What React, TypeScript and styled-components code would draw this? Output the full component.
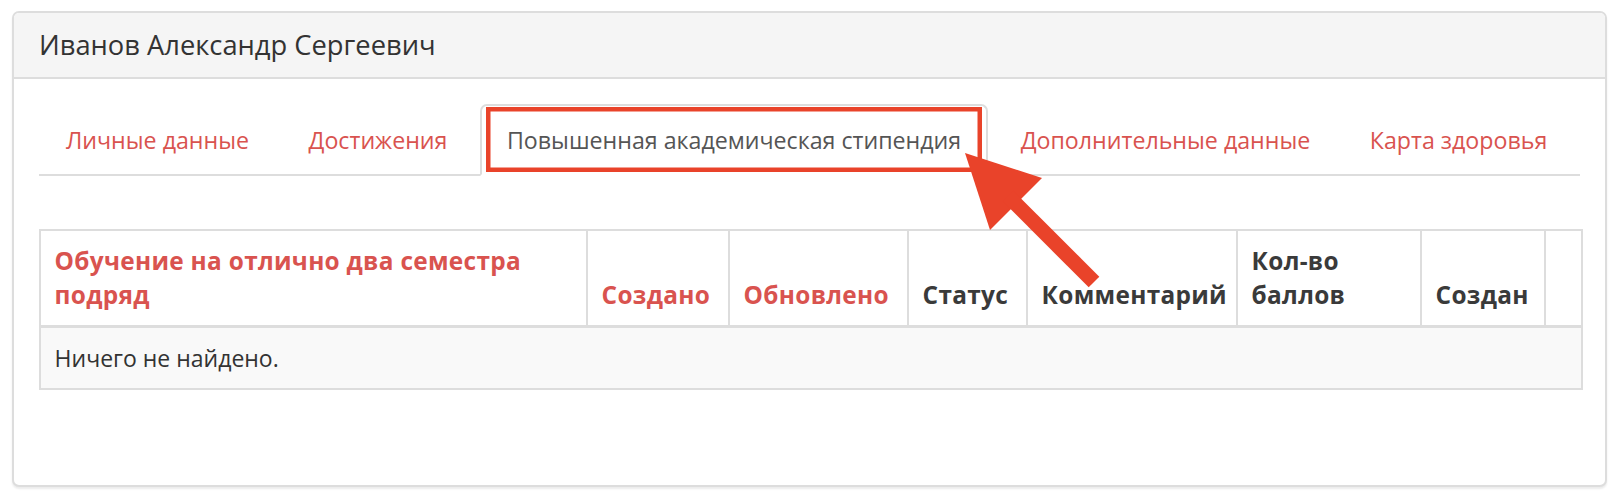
import styled, { createGlobalStyle } from "styled-components";

const GlobalStyle = createGlobalStyle`
  html, body {
    margin: 0;
    padding: 0;
    background: #ffffff;
  }
  body {
    font-family: "Open Sans", "Liberation Sans", sans-serif;
    font-size: 23px;
    line-height: 34px;
    color: #333333;
  }
  * { box-sizing: border-box; }
`;

const Page = styled.div`
  position: relative;
  width: 1618px;
  height: 498px;
  padding: 11px 11px 0 12px;
`;

const Panel = styled.div`
  background: #ffffff;
  border: 2px solid #dddddd;
  border-radius: 7px;
  box-shadow: 0 2px 2px rgba(0, 0, 0, 0.08);
  overflow: hidden;
`;

const PanelHeading = styled.div`
  background: #f5f5f5;
  border-bottom: 2px solid #dddddd;
  padding: 17px 25px;
`;

const PanelTitle = styled.h3`
  margin: 0;
  font-size: 27.3px;
  line-height: 30px;
  font-weight: 400;
  color: #333333;
`;

const PanelBody = styled.div`
  padding: 25px 25px 95px;
`;

const Tabs = styled.ul`
  display: flex;
  list-style: none;
  margin: 0;
  padding: 0;
  border-bottom: 2px solid #dddddd;
`;

const Tab = styled.li`
  margin-bottom: -2px;
`;

const TabLink = styled.a<{ $active?: boolean }>`
  display: block;
  margin-right: 5.5px;
  padding: 17px 25px;
  font-size: 23.2px;
  line-height: 34px;
  border: 2px solid ${(p) => (p.$active ? "#dddddd" : "transparent")};
  border-bottom-color: transparent;
  border-radius: 7px 7px 0 0;
  background: ${(p) => (p.$active ? "#ffffff" : "transparent")};
  color: ${(p) => (p.$active ? "#555555" : "#d9534f")};
  text-decoration: none;
  white-space: nowrap;
  cursor: pointer;
`;

const TabContent = styled.div`
  padding-top: 53px;
`;

const Table = styled.table`
  width: 100%;
  table-layout: fixed;
  border-collapse: collapse;
  border: 2px solid #dddddd;
`;

const Th = styled.th<{ $link?: boolean }>`
  padding: 13px 13.6px;
  font-size: 24.4px;
  letter-spacing: 0.3px;
  line-height: 34px;
  text-align: left;
  vertical-align: bottom;
  font-weight: 700;
  color: ${(p) => (p.$link ? "#d9534f" : "#3a3a3a")};
  border: 2px solid #dddddd;
  border-bottom-width: 3px;
`;

const Td = styled.td`
  padding: 13px 13.6px;
  line-height: 34px;
  background: #f9f9f9;
  border: 2px solid #dddddd;
  color: #333333;
`;

const Overlay = styled.svg`
  position: absolute;
  top: 0;
  left: 0;
  pointer-events: none;
`;

const tabs = [
  "Личные данные",
  "Достижения",
  "Повышенная академическая стипендия",
  "Дополнительные данные",
  "Карта здоровья",
];

const columns: { title: string; width: number; link?: boolean }[] = [
  { title: "Обучение на отлично два семестра подряд", width: 547, link: true },
  { title: "Создано", width: 142, link: true },
  { title: "Обновлено", width: 179, link: true },
  { title: "Статус", width: 119 },
  { title: "Комментарий", width: 210 },
  { title: "Кол-во баллов", width: 184 },
  { title: "Создан", width: 124 },
  { title: "", width: 37 },
];

const App = () => {
  const activeTab = 2;
  return (
    <Page>
      <GlobalStyle />
      <Panel>
        <PanelHeading>
          <PanelTitle>Иванов Александр Сергеевич</PanelTitle>
        </PanelHeading>
        <PanelBody>
          <Tabs>
            {tabs.map((t, i) => (
              <Tab key={t}>
                <TabLink $active={i === activeTab}>{t}</TabLink>
              </Tab>
            ))}
          </Tabs>
          <TabContent>
            <Table>
              <colgroup>
                {columns.map((c, i) => (
                  <col key={i} style={{ width: c.width }} />
                ))}
              </colgroup>
              <thead>
                <tr>
                  {columns.map((c, i) => (
                    <Th key={i} $link={c.link}>
                      {c.title}
                    </Th>
                  ))}
                </tr>
              </thead>
              <tbody>
                <tr>
                  <Td colSpan={columns.length}>Ничего не найдено.</Td>
                </tr>
              </tbody>
            </Table>
          </TabContent>
        </PanelBody>
      </Panel>

      <Overlay width="1618" height="498" viewBox="0 0 1618 498">
        <rect x="488.25" y="109.25" width="491.5" height="60.5" fill="none" stroke="#e9432a" strokeWidth="4.5" />
        <polygon points="965,153 1042,178 990,230" fill="#e9432a" />
        <line x1="1008" y1="196" x2="1094" y2="282" stroke="#e9432a" strokeWidth="15" />
      </Overlay>
    </Page>
  );
};

export default App;
